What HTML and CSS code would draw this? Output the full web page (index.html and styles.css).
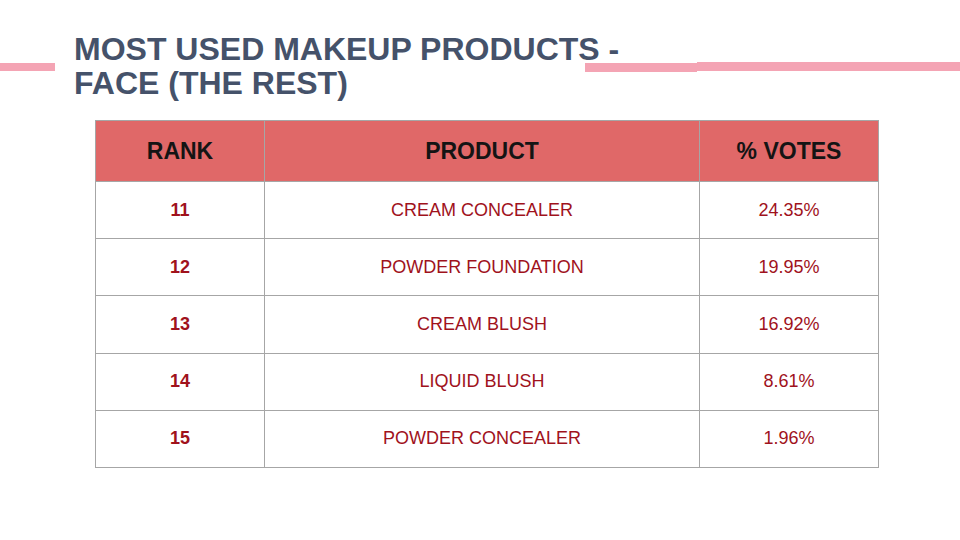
FILE: index.html
```html
<!DOCTYPE html>
<html>
<head>
<meta charset="utf-8">
<link rel="stylesheet" href="styles.css">
</head>
<body>
<div class="slide">
  <div class="bar bar-left"></div>
  <div class="bar bar-right-a"></div>
  <div class="bar bar-right-b"></div>
  <h1 class="title">MOST USED MAKEUP PRODUCTS -<br>FACE (THE REST)</h1>
  <table class="grid">
    <colgroup>
      <col class="c-rank"><col class="c-prod"><col class="c-votes">
    </colgroup>
    <thead>
      <tr><th>RANK</th><th>PRODUCT</th><th>% VOTES</th></tr>
    </thead>
    <tbody>
      <tr><td class="rank">11</td><td>CREAM CONCEALER</td><td>24.35%</td></tr>
      <tr><td class="rank">12</td><td>POWDER FOUNDATION</td><td>19.95%</td></tr>
      <tr><td class="rank">13</td><td>CREAM BLUSH</td><td>16.92%</td></tr>
      <tr><td class="rank">14</td><td>LIQUID BLUSH</td><td>8.61%</td></tr>
      <tr><td class="rank">15</td><td>POWDER CONCEALER</td><td>1.96%</td></tr>
    </tbody>
  </table>
</div>
</body>
</html>
```
FILE: styles.css
```css
html, body {
  margin: 0;
  padding: 0;
  background: #ffffff;
}
.slide {
  position: relative;
  width: 960px;
  height: 540px;
  overflow: hidden;
  font-family: "Liberation Sans", Arial, sans-serif;
}
.bar {
  position: absolute;
  background: #f4a4b4;
  height: 9px;
}
.bar-left { left: 0; top: 63px; width: 55px; height: 8px; }
.bar-right-a { left: 585px; top: 63px; width: 112px; }
.bar-right-b { left: 697px; top: 62px; width: 263px; }
.title {
  margin: 0;
  padding: 32px 0 0 74px;
  font-size: 32px;
  line-height: 34px;
  font-weight: bold;
  color: #45526a;
}
.grid {
  margin: 20px 0 0 95px;
  border-collapse: collapse;
  width: 783px;
  table-layout: fixed;
}
.c-rank { width: 169px; }
.c-prod { width: 435px; }
.c-votes { width: 179px; }
.grid th, .grid td {
  border: 1px solid #a6a6a6;
  text-align: center;
  padding: 0;
}
.grid th {
  background: #e06868;
  height: 60px;
  font-size: 23px;
  font-weight: bold;
  color: #141414;
}
.grid td {
  height: 56.2px;
  font-size: 18px;
  color: #a0121c;
}
.grid td.rank {
  font-weight: bold;
}
```
